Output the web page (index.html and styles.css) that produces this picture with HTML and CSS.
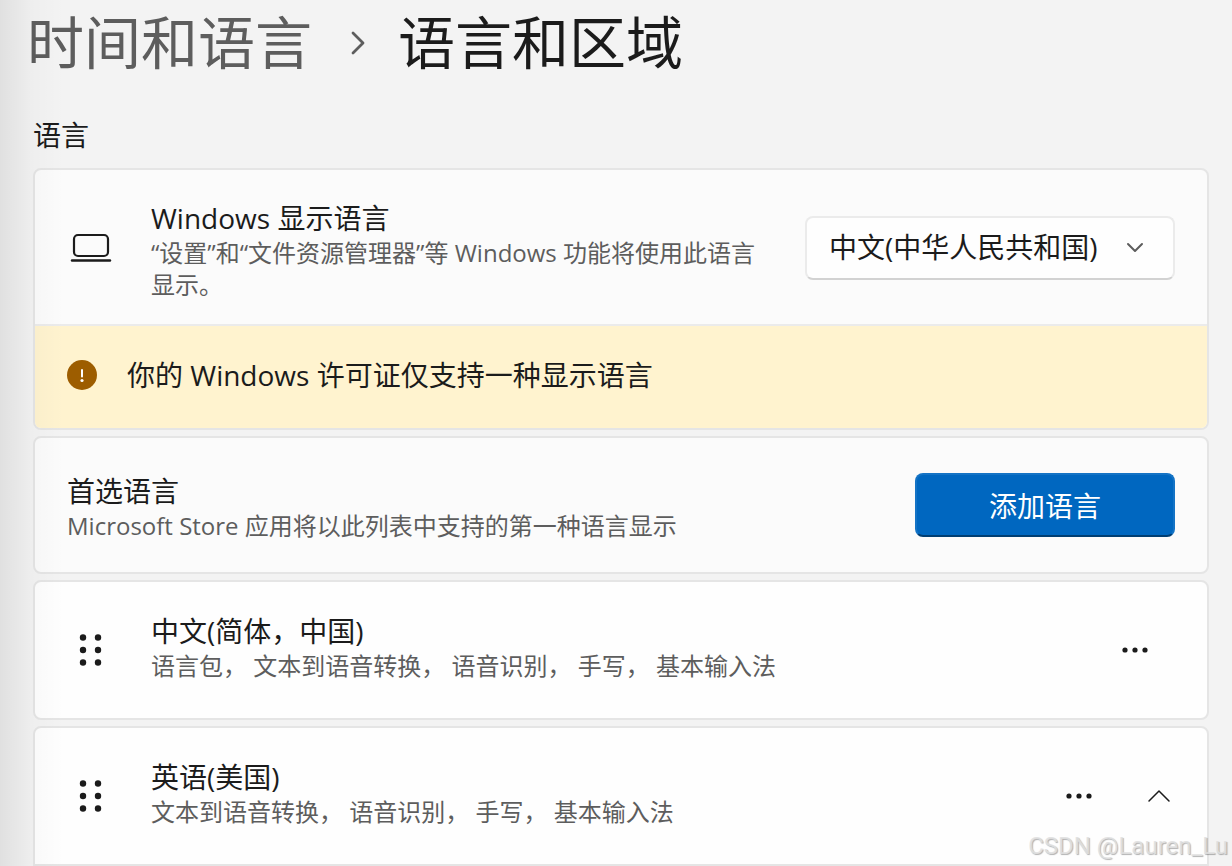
FILE: index.html
```html
<!DOCTYPE html>
<html lang="zh-CN">
<head>
    <meta charset="UTF-8">
    <meta name="viewport" content="width=device-width, initial-scale=1.0">
    <title>语言和区域</title>
    <link rel="stylesheet" href="styles.css">
</head>
<body>
    <main class="settings">
        <nav class="breadcrumb">
            <a href="#">时间和语言</a>
            <svg class="crumb-arrow" width="20" height="24" viewBox="-5 0 20 24" fill="none" stroke="#5d5d5d" stroke-width="2.8" stroke-linecap="round" stroke-linejoin="round"><path d="M3 2l10 10L3 22"/></svg>
            <h1>语言和区域</h1>
        </nav>

        <h2 class="section-title">语言</h2>

        <section class="card-list">
            <div class="card">
                <div class="row display-row">
                    <svg class="row-icon" width="48" height="40" viewBox="0 0 48 40" fill="none" stroke="#1b1b1b" stroke-linecap="round"><rect x="7" y="7" width="34" height="21" rx="4" stroke-width="2.2"/><path d="M5 32.5h38" stroke-width="2.4"/></svg>
                    <div class="row-text">
                        <label class="title" for="displayLanguage">Windows 显示语言</label>
                        <p class="desc">“设置”和“文件资源管理器”等 Windows 功能将使用此语言显示。</p>
                    </div>
                    <div class="select-box">
                        <select id="displayLanguage" name="displayLanguage">
                            <option>中文(中华人民共和国)</option>
                        </select>
                        <svg class="select-arrow" width="18" height="12" viewBox="0 0 18 12" fill="none" stroke="#5d5d5d" stroke-width="2" stroke-linecap="round" stroke-linejoin="round"><path d="M2 2l7 7 7-7"/></svg>
                    </div>
                </div>
                <div class="warning">
                    <svg width="30" height="30" viewBox="0 0 30 30"><circle cx="15" cy="15" r="15" fill="#9d5d00"/><path d="M15 10v6.400" stroke="#fff" stroke-width="2" stroke-linecap="round"/><circle cx="15" cy="20.500" r="1.600" fill="#fff"/></svg>
                    <p>你的 Windows 许可证仅支持一种显示语言</p>
                </div>
            </div>

            <div class="card">
                <div class="row preferred-row">
                    <div class="row-text">
                        <h3 class="title">首选语言</h3>
                        <p class="desc">Microsoft Store 应用将以此列表中支持的第一种语言显示</p>
                    </div>
                    <button type="button" class="add-btn">添加语言</button>
                </div>
            </div>

            <div class="card language">
                <div class="row">
                    <svg class="row-icon" width="48" height="40" viewBox="0 0 48 40" fill="#1b1b1b"><circle cx="16" cy="7.500" r="3.200"/><circle cx="31" cy="7.500" r="3.200"/><circle cx="16" cy="20" r="3.200"/><circle cx="31" cy="20" r="3.200"/><circle cx="16" cy="32.500" r="3.200"/><circle cx="31" cy="32.500" r="3.200"/></svg>
                    <div class="row-text">
                        <h3 class="title">中文(简体，中国)</h3>
                        <p class="desc">语言包， 文本到语音转换， 语音识别， 手写， 基本输入法</p>
                    </div>
                    <button type="button" class="icon-btn" aria-label="更多选项"><svg width="28" height="8" viewBox="0 0 28 8" fill="#1b1b1b"><circle cx="4" cy="4" r="2.600"/><circle cx="14" cy="4" r="2.600"/><circle cx="24" cy="4" r="2.600"/></svg></button>
                </div>
            </div>

            <div class="card language expanded">
                <div class="row">
                    <svg class="row-icon" width="48" height="40" viewBox="0 0 48 40" fill="#1b1b1b"><circle cx="16" cy="7.500" r="3.200"/><circle cx="31" cy="7.500" r="3.200"/><circle cx="16" cy="20" r="3.200"/><circle cx="31" cy="20" r="3.200"/><circle cx="16" cy="32.500" r="3.200"/><circle cx="31" cy="32.500" r="3.200"/></svg>
                    <div class="row-text">
                        <h3 class="title">英语(美国)</h3>
                        <p class="desc">文本到语音转换， 语音识别， 手写， 基本输入法</p>
                    </div>
                    <button type="button" class="icon-btn" aria-label="更多选项"><svg width="28" height="8" viewBox="0 0 28 8" fill="#1b1b1b"><circle cx="4" cy="4" r="2.600"/><circle cx="14" cy="4" r="2.600"/><circle cx="24" cy="4" r="2.600"/></svg></button>
                    <button type="button" class="icon-btn collapse-btn" aria-label="折叠"><svg width="24" height="14" viewBox="0 0 24 14" fill="none" stroke="#1b1b1b" stroke-width="1.500" stroke-linecap="round" stroke-linejoin="round"><path d="M2 12L12 2l10 10"/></svg></button>
                </div>
            </div>
        </section>
    </main>

    <div class="edge-shade"></div>
    <div class="watermark">CSDN @Lauren_Lu</div>
</body>
</html>
```

FILE: styles.css
```css
* {
    margin: 0;
    padding: 0;
    box-sizing: border-box;
}

body {
    font-family: "Open Sans", "Noto Sans CJK SC", sans-serif;
    font-size: 28px;
    color: #1b1b1b;
    background: #f3f3f3;
    min-height: 100vh;
    position: relative;
    overflow: hidden;
}

svg {
    display: block;
    flex-shrink: 0;
}

.settings {
    padding: 0 23px 0 33px;
}

/* Header */
.breadcrumb {
    display: flex;
    align-items: center;
    height: 86px;
    margin-left: -6px;
    gap: 33px;
}

.breadcrumb a,
.breadcrumb h1 {
    font-size: 57px;
    font-weight: 400;
    line-height: 80px;
    padding-bottom: 2px;
    color: #5d5d5d;
    text-decoration: none;
}

.breadcrumb h1 {
    color: #1b1b1b;
}

.section-title {
    font-size: 28px;
    font-weight: 400;
    line-height: 38px;
    margin: 30px 0 14px;
}

/* Cards */
.card-list {
    display: flex;
    flex-direction: column;
    gap: 6px;
}

.card {
    background: #fbfbfb;
    border: 2px solid #e5e5e5;
    border-radius: 8px;
    overflow: hidden;
}

.row {
    display: flex;
    align-items: center;
    padding: 24px 32px;
}

.display-row {
    min-height: 156px;
    padding-bottom: 22px;
    border-bottom: 2px solid #ebebeb;
}

.display-row .row-text {
    padding-top: 4px;
}

.preferred-row {
    min-height: 134px;
}

.preferred-row .row-text {
    padding-top: 4px;
}

.language {
    background: #fefefe;
}

.language .row {
    min-height: 136px;
}

.language .row-text {
    padding-bottom: 6px;
}

.expanded {
    border-radius: 8px 8px 0 0;
}

.row-icon {
    margin-right: 36px;
}

.row-text {
    flex: 1;
    min-width: 0;
}

.title {
    display: block;
    font-size: 28px;
    font-weight: 400;
    line-height: 38px;
}

.desc {
    font-size: 24px;
    line-height: 32px;
    color: #5d5d5d;
}

.warning {
    display: flex;
    align-items: center;
    gap: 30px;
    min-height: 102px;
    padding: 0 32px 4px;
    background: #fff3cf;
}

.warning p {
    padding-bottom: 2px;
}

/* Controls */
.select-box {
    position: relative;
    width: 370px;
    margin-left: 32px;
}

.select-box select {
    appearance: none;
    width: 100%;
    height: 64px;
    padding: 0 60px 2px 22px;
    font: inherit;
    color: inherit;
    background: #fefefe;
    border: 2px solid #ebebeb;
    border-bottom-color: #d2d2d2;
    border-radius: 8px;
}

.select-arrow {
    position: absolute;
    right: 31px;
    top: 26px;
    pointer-events: none;
}

.add-btn {
    width: 260px;
    height: 64px;
    font: inherit;
    color: #fff;
    background: #0067c0;
    border: 2px solid #1473c5;
    border-bottom-color: #003e73;
    border-radius: 8px;
}

.icon-btn {
    display: flex;
    align-items: center;
    justify-content: center;
    width: 80px;
    height: 64px;
    background: none;
    border: none;
}

.collapse-btn {
    margin-right: -24px;
}

/* Overlays */
.edge-shade {
    position: absolute;
    top: 0;
    bottom: 0;
    left: 0;
    width: 64px;
    background: linear-gradient(to right, rgba(0, 0, 0, 0.08), rgba(0, 0, 0, 0.02) 50%, rgba(0, 0, 0, 0));
    pointer-events: none;
}

.watermark {
    position: absolute;
    right: 4px;
    bottom: 4px;
    font-family: Roboto, sans-serif;
    font-size: 24px;
    line-height: 32px;
    color: rgba(225, 225, 225, 0.9);
    text-shadow: 1px 1px 1px rgba(0, 0, 0, 0.3);
    pointer-events: none;
}
```
